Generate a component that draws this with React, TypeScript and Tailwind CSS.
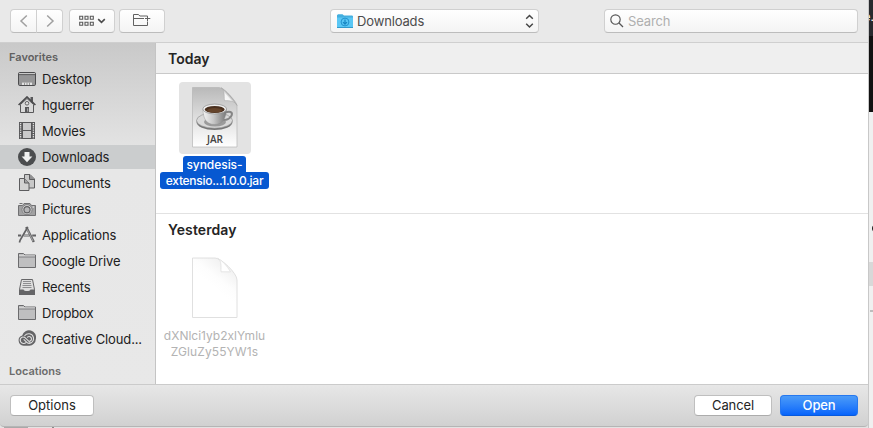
import type { ReactNode } from 'react';

function DesktopIcon() {
  return (
    <svg width="18" height="18" viewBox="0 0 18 18">
      <rect x="0.5" y="2.5" width="17" height="13" rx="1.2" fill="#969697" stroke="#4c4c4e" />
      <path d="M1 3.600h16" stroke="#d5d5d5" strokeWidth="0.9" />
      <path d="M1 4.600h16" stroke="#4c4c4e" strokeWidth="0.8" />
      <path d="M4 15v-2.400h10V15z" fill="#e2e2e2" />
      <path d="M6.5 12.800V15M9 12.600V15M11.5 12.800V15" stroke="#777" strokeWidth="0.7" />
    </svg>
  );
}

function HomeIcon() {
  return (
    <svg width="18" height="18" viewBox="0 0 18 18">
      <path d="M12.500 1h2.500V7h-2.500z" fill="#58585a" />
      <path d="M2.500 8.500 9 2.500l6.500 6v8h-13z" fill="#d9d9d9" stroke="#58585a" />
      <path d="M0.600 9 9 1l8.400 8" fill="none" stroke="#4c4c4e" strokeWidth="1.7" />
      <circle cx="9" cy="7.300" r="1.8" fill="#e3e3e3" stroke="#58585a" strokeWidth="0.9" />
      <path d="M7 16.500v-5.500h4v5.500z" fill="#58585a" />
      <path d="M9.700 12.300v3.300" stroke="#b5b5b5" />
    </svg>
  );
}

function MoviesIcon() {
  return (
    <svg width="18" height="18" viewBox="0 0 18 18">
      <rect x="1" y="0" width="16" height="17" fill="#58585a" />
      <path d="M2.600 0.900v15.600M15.400 0.900v15.600" stroke="#dedede" strokeWidth="1.300" strokeDasharray="1.300 0.900" />
      <rect x="5" y="1" width="8" height="7" fill="#c9c9ca" />
      <rect x="5" y="9" width="8" height="7" fill="#c9c9ca" />
    </svg>
  );
}

function DownloadsIcon() {
  return (
    <svg width="18" height="18" viewBox="0 0 18 18">
      <circle cx="9" cy="9" r="9" fill="#4b4d4f" />
      <path d="M6.500 4h5v4.400h2.900L9 14.200 3.600 8.400h2.900z" fill="#f0f1f1" />
    </svg>
  );
}

function DocumentsIcon() {
  return (
    <svg width="18" height="18" viewBox="0 0 18 18">
      <path d="M6.500 0.500h5.500l4.500 4.500v9H6.500z" fill="#c8c8c8" stroke="#5c5c5e" />
      <path d="M11.500 0.500v5h5" fill="#909092" stroke="#5c5c5e" />
      <path d="M1.500 4.500h5l4.500 4.500v7.500H1.500z" fill="#d2d2d2" stroke="#5c5c5e" />
      <path d="M6.500 4.500v4.500h4.500" fill="#a3a3a4" stroke="#5c5c5e" />
    </svg>
  );
}

function PicturesIcon() {
  return (
    <svg width="18" height="18" viewBox="0 0 18 18">
      <path d="M0.500 5.500h4l1.500-2h6l1.500 2h4v10H0.500z" fill="#a1a1a2" stroke="#707072" />
      <path d="M1.500 3.500h3" stroke="#707072" />
      <circle cx="9" cy="9.700" r="5" fill="#dddddd" stroke="#707072" strokeWidth="0.8" />
      <circle cx="9" cy="9.700" r="3.100" fill="#b5b5b7" stroke="#606062" strokeWidth="1.200" />
      <circle cx="15.300" cy="7" r="0.800" fill="#e5e5e5" />
    </svg>
  );
}

function ApplicationsIcon() {
  return (
    <svg width="18" height="18" viewBox="0 0 18 18" fill="none" stroke="#626264">
      <path d="M8.200 1 15.800 16" strokeWidth="2.400" />
      <path d="M8.800 2.700 15 15" stroke="#bcbcbd" strokeWidth="0.800" />
      <path d="M9.800 1 2.200 14l-.8 2.500" strokeWidth="1.700" />
      <path d="M0 9.500h3.200M5.600 9.500h6M14.200 9.500H18" strokeWidth="2.200" />
      <path d="M6 9.500h5" stroke="#c8c8c8" strokeWidth="0.700" />
    </svg>
  );
}

function FolderIcon() {
  return (
    <svg width="18" height="18" viewBox="0 0 18 18">
      <path d="M0.500 15.500v-14h5l1.500 1.500h10.500v12.500z" fill="#bfbfc0" stroke="#6b6b6d" />
      <path d="M1 3.500h16v1H1z" fill="#e4e4e4" />
      <path d="M1 5h16" stroke="#77777a" strokeWidth="0.900" />
    </svg>
  );
}

function RecentsIcon() {
  return (
    <svg width="18" height="18" viewBox="0 0 18 18">
      <path d="M3.500 1.500h11l2 10v5h-15v-5z" fill="#dedede" stroke="#666668" />
      <path d="M1 11.500h4.500c.5 2 6.500 2 7 0H17V17H1z" fill="#656567" />
      <path d="M5 3.500h8M5 5.500h8M4.500 7.500h9M4.500 9.500h9" stroke="#858587" strokeWidth="0.900" />
    </svg>
  );
}

function CreativeCloudIcon() {
  return (
    <svg width="18" height="18" viewBox="0 0 18 18">
      <g transform="translate(0 .7)">
        <path d="M5.500 15a5.300 5.300 0 0 1-1.300-10.300A6.700 6.700 0 0 1 17.800 8.500 6.500 6.500 0 0 1 11.100 15z" fill="#646466" />
        <g fill="none" stroke="#dfdfdf" strokeWidth="1.100" strokeLinecap="round">
          <path d="M8 12c-1.200 1-4 1.200-5.200-.7C1 8 4 5.200 7 6.900l5 4.700" />
          <path d="M6.700 5c2-3 7.700-2.700 8.700 1.700.9 5-4.400 7.600-7.100 4.500L6 9" />
          <path d="M9.500 6.500c1.500-1.400 4-.4 4 1.700 0 1.200-.8 2-1.700 2.200" />
        </g>
      </g>
    </svg>
  );
}

const favorites: { label: string; icon: ReactNode; selected?: boolean }[] = [
  { label: 'Desktop', icon: <DesktopIcon /> },
  { label: 'hguerrer', icon: <HomeIcon /> },
  { label: 'Movies', icon: <MoviesIcon /> },
  { label: 'Downloads', icon: <DownloadsIcon />, selected: true },
  { label: 'Documents', icon: <DocumentsIcon /> },
  { label: 'Pictures', icon: <PicturesIcon /> },
  { label: 'Applications', icon: <ApplicationsIcon /> },
  { label: 'Google Drive', icon: <FolderIcon /> },
  { label: 'Recents', icon: <RecentsIcon /> },
  { label: 'Dropbox', icon: <FolderIcon /> },
  { label: 'Creative Cloud...', icon: <CreativeCloudIcon /> },
];

const control =
  'flex h-[24px] items-center rounded-[4px] border border-[#d0d0d0] border-b-[#bcbcbc] bg-linear-to-b from-white to-[#f4f4f4]';

function Toolbar() {
  return (
    <header className="flex h-[43px] shrink-0 items-start border-b border-[#cfcfcf] bg-[#e9e9e9] pt-[9px] pl-[10px]">
      <div className="flex">
        <button className={`${control} w-[27px] justify-center rounded-r-none`}>
          <svg width="10" height="14" viewBox="0 0 10 14" fill="none" stroke="#a0a0a0" strokeWidth="1.500">
            <path d="M7.800 1.500 2 7l5.800 5.500" />
          </svg>
        </button>
        <button className={`${control} -ml-px w-[27px] justify-center rounded-l-none`}>
          <svg width="10" height="14" viewBox="0 0 10 14" fill="none" stroke="#a0a0a0" strokeWidth="1.500">
            <path d="M2.200 1.500 8 7l-5.800 5.500" />
          </svg>
        </button>
      </div>
      <button className={`${control} ml-[6px] w-[46px] justify-center gap-[3px]`}>
        <svg width="15" height="12" viewBox="0 0 15 12" fill="none" stroke="#595959" strokeWidth="1.100">
          <path d="M.7 1.200h3v3h-3zM6 1.200h3v3H6zM11.300 1.200h3v3h-3zM.7 7.200h3v3h-3zM6 7.200h3v3H6zM11.300 7.200h3v3h-3z" />
        </svg>
        <svg width="9" height="6" viewBox="0 0 9 6" fill="none" stroke="#4c4c4c" strokeWidth="1.600">
          <path d="M1.200 1.200 4.500 4.300l3.300-3.100" />
        </svg>
      </button>
      <button className={`${control} ml-[4px] w-[46px] justify-center`}>
        <svg width="18" height="14" viewBox="0 0 18 14" fill="none" stroke="#616161" className="-mt-[2px]">
          <path d="M14.500 8.500v4h-14v-11h5l1.300 1.500h7.700M.5 5.500H11M14.500 3v5M12 5.500h5.300" />
        </svg>
      </button>

      <button className={`${control} ml-[165px] w-[209px] pr-[4px] pl-[6px]`}>
        <svg width="16" height="15" viewBox="0 0 16 15">
          <path d="M0 14V1.200L1 .3h4.500L7 1.500h8.200l.8.800V14z" fill="#43aede" />
          <path d="M0 3.500h16V13H0z" fill="#59c7f5" />
          <path d="M0 13h16v1H0z" fill="#3299cb" />
          <circle cx="8" cy="8" r="3.900" fill="none" stroke="#2290cc" />
          <path d="M8 5.500v4.700M6 8.200l2 2 2-2" fill="none" stroke="#1685c2" strokeWidth="1.200" />
        </svg>
        <span className="ml-[4px] pt-px text-[13px] tracking-[-0.15px] text-[#4c4c4c]">Downloads</span>
        <svg width="9" height="15" viewBox="0 0 9 15" className="ml-auto" fill="none" stroke="#454545" strokeWidth="1.500">
          <path d="M1.200 4.700 4.500 1.500l3.300 3.200M1.200 9.800l3.300 3.200 3.300-3.200" />
        </svg>
      </button>

      <label className={`${control} ml-[65px] w-[254px] pl-[5px]`}>
        <svg width="14" height="14" viewBox="0 0 14 14" fill="none" stroke="#555" strokeWidth="1.150">
          <circle cx="5.500" cy="5.500" r="4.700" />
          <path d="m9 9 4 4" />
        </svg>
        <span className="ml-[4px] pt-px text-[13px] tracking-[-0.15px] text-[#afafaf]">Search</span>
      </label>
    </header>
  );
}

function Sidebar() {
  return (
    <aside className="flex w-[156px] shrink-0 flex-col border-r border-[#c4c4c4] bg-linear-to-b from-[#c9c9c9] via-[#e7e7e7] via-35% to-[#e8e8e8]">
      <h2 className="mt-[7px] pl-[9px] text-[11px] leading-[15px] font-semibold text-[#606060]">Favorites</h2>
      <ul className="mt-[2px] flex flex-col gap-[2px]">
        {favorites.map(({ label, icon, selected }) => (
          <li key={label} className={`flex h-6 items-center gap-[6px] pl-[18px] ${selected ? 'bg-[#cbcdce]' : ''}`}>
            {icon}
            <span className="pt-[2px] text-[13px] tracking-[-0.13px] whitespace-nowrap text-[#202020]">{label}</span>
          </li>
        ))}
      </ul>
      <h2 className="mt-[13px] pl-[9px] text-[11px] leading-[15px] font-semibold text-[#6c6c6c]">Locations</h2>
    </aside>
  );
}

function JarIcon() {
  return (
    <svg width="48" height="62" viewBox="0 0 48 62">
      <defs>
        <linearGradient id="jarPage" x1="0" y1="0" x2="0" y2="1">
          <stop offset="0" stopColor="#b9b9b9" />
          <stop offset="0.600" stopColor="#e5e5e5" />
          <stop offset="1" stopColor="#fff" />
        </linearGradient>
        <linearGradient id="cup" x1="0" y1="0" x2="1" y2="0">
          <stop offset="0" stopColor="#f3f3f3" />
          <stop offset="0.450" stopColor="#c7c7c7" />
          <stop offset="1" stopColor="#777" />
        </linearGradient>
        <linearGradient id="jarFold" x1="0" y1="1" x2="1" y2="0">
          <stop offset="0" stopColor="#fff" />
          <stop offset="0.450" stopColor="#f5f5f5" />
          <stop offset="0.600" stopColor="#8d8d8d" />
        </linearGradient>
      </defs>
      <path d="M1.500.500H28c4 0 18 14 18 18v41.500H1.500z" fill="url(#jarPage)" stroke="#b6b6b6" strokeWidth="0.700" />
      <path d="M30 .600c4 2 3 8 3.500 13C39 13.500 44 14 46 18.500 42 12 36 4 30 .600z" fill="url(#jarFold)" stroke="#999" strokeWidth="0.400" />
      <ellipse cx="23.500" cy="35" rx="18" ry="8" fill="#777" />
      <ellipse cx="23.500" cy="33.500" rx="18" ry="7.700" fill="#d9d9d9" stroke="#898989" strokeWidth="0.600" />
      <ellipse cx="24" cy="35" rx="11" ry="4.500" fill="#9b9b9b" />
      <path d="M34 25.500c7-2.300 8 1 6 4-1.500 2.400-5 3.800-8 3.200" fill="none" stroke="#858585" strokeWidth="2" />
      <path d="M12 22c0 9 3 15.500 11.500 15.500S35 31 35.500 22z" fill="url(#cup)" stroke="#888" strokeWidth="0.400" />
      <ellipse cx="23.700" cy="22" rx="11.900" ry="4.900" fill="#efefef" stroke="#898989" strokeWidth="0.700" />
      <ellipse cx="23.700" cy="22.500" rx="10" ry="3.500" fill="#4a301f" />
      <ellipse cx="23.700" cy="23.300" rx="7.500" ry="2.300" fill="#65442b" />
      <text x="24" y="55.800" textAnchor="middle" fontFamily="'Open Sans', sans-serif" fontSize="10" fontWeight="600" fill="#424242">JAR</text>
    </svg>
  );
}

function BlankDocumentIcon() {
  return (
    <svg width="48" height="62" viewBox="0 0 48 62">
      <defs>
        <linearGradient id="blankPage" x1="0.800" y1="0" x2="0.500" y2="0.500">
          <stop offset="0" stopColor="#ececec" />
          <stop offset="0.700" stopColor="#fdfdfd" />
          <stop offset="1" stopColor="#fff" />
        </linearGradient>
      </defs>
      <path d="M1.500 1H24c6 0 22 15 22 22V60.500H1.500z" fill="url(#blankPage)" stroke="#dcdcdc" strokeWidth="0.900" />
      <path d="M26.500 1.300c4.500 2.500 3.300 8 3.500 13.500h9.500C36 9 32 4 26.500 1.300z" fill="#fff" stroke="#e0e0e0" strokeWidth="0.800" />
    </svg>
  );
}

function Files() {
  return (
    <main className="flex flex-1 flex-col bg-white">
      <h1 className="h-[31px] border-b border-[#c9c9c9] bg-[#efefef] pl-3 text-[14px] leading-[32px] font-semibold text-[#242424]">Today</h1>
      <section className="h-[140px] shrink-0 border-b border-[#e2e2e2] pt-[8px]">
        <figure className="ml-1 flex w-[109px] flex-col items-center">
          <div className="flex h-[72px] w-[72px] items-center justify-center rounded-[4px] bg-[#e3e3e3]">
            <JarIcon />
          </div>
          <figcaption className="mt-[2px] flex flex-col items-center text-[12px] leading-[16px] font-medium text-white">
            <span className="h-[16px] w-[63px] rounded-t-[3px] bg-[#0758d1] text-center leading-[18px] tracking-[-0.05px]">syndesis-</span>
            <span className="h-[17px] w-[109px] rounded-[3px] bg-[#0758d1] text-center leading-[18px] tracking-[-0.28px] whitespace-nowrap">extensio...1.0.0.jar</span>
          </figcaption>
        </figure>
      </section>
      <section>
        <h2 className="pl-3 text-[14px] leading-[32px] font-semibold tracking-[0.1px] text-[#242424]">Yesterday</h2>
        <figure className="ml-1 flex w-[109px] flex-col items-center pt-[11px]">
          <BlankDocumentIcon />
          <figcaption className="mt-[9px] text-center text-[12px] leading-[16px] text-[#b3b3b3]">
            dXNlci1yb2xlYmlu
            <br />
            <span className="tracking-[0.1px]">ZGluZy55YW1s</span>
          </figcaption>
        </figure>
      </section>
    </main>
  );
}

function Footer() {
  const button = 'h-[21px] rounded-[4px] border text-[13px] leading-[19px]';
  return (
    <footer className="flex h-[43px] shrink-0 items-start rounded-b-[4px] border-t border-b border-[#cbcbcb] border-b-[#b5b5b5] bg-linear-to-b from-[#e7e7e7] to-[#d1d1d1] px-[10px] pt-[10px]">
      <button className={`${button} w-[84px] border-[#bfbfbf] border-b-[#acacac] bg-white text-[#242424]`}>Options</button>
      <button className={`${button} ml-auto w-[78px] border-[#bfbfbf] border-b-[#acacac] bg-white tracking-[-0.1px] text-[#242424]`}>Cancel</button>
      <button className={`${button} ml-2 w-[78px] border-[#2678ef] border-b-[#0759dc] bg-linear-to-b from-[#4b9bf8] to-[#0564fb] font-medium tracking-[-0.15px] text-white`}>Open</button>
    </footer>
  );
}

export default function App() {
  return (
    <div className="flex h-[428px] w-[873px] overflow-hidden bg-[#e3e3e3] font-['Inter','Liberation_Sans',sans-serif]">
      <div className="flex h-[428px] w-[868px] shrink-0 flex-col">
        <Toolbar />
        <div className="flex h-[341px] shrink-0">
          <Sidebar />
          <Files />
        </div>
        <Footer />
        <div className="flex h-px shrink-0">
          <div className="ml-1 w-[24px] bg-[#a9a9a9]" />
          <div className="ml-[24px] w-[2px] bg-[#8a8a8a]" />
        </div>
      </div>
      <div className="flex w-[5px] flex-col overflow-hidden border-l border-[#c8c8c8] bg-[#f0f0f0]">
        <div className="-ml-px h-[36px] w-[5px] shrink-0 overflow-hidden bg-[#282a2e] pt-[9px] text-[12px] leading-[16px] text-white">
          <span className="-ml-[4.500px] block whitespace-nowrap">e.</span>
        </div>
        <div className="-ml-px h-[76px] w-[5px] shrink-0 bg-[#111]" />
        <div className="mt-[113px] ml-[3px] h-[7px] w-[4px] shrink-0 rounded-l-full bg-[#222]" />
        <div className="mt-[30px] h-6 shrink-0 bg-[#d8d8d8]" />
        <div className="mt-[24px] ml-px h-[2px] shrink-0 bg-[#bdbdbd]" />
      </div>
    </div>
  );
}
